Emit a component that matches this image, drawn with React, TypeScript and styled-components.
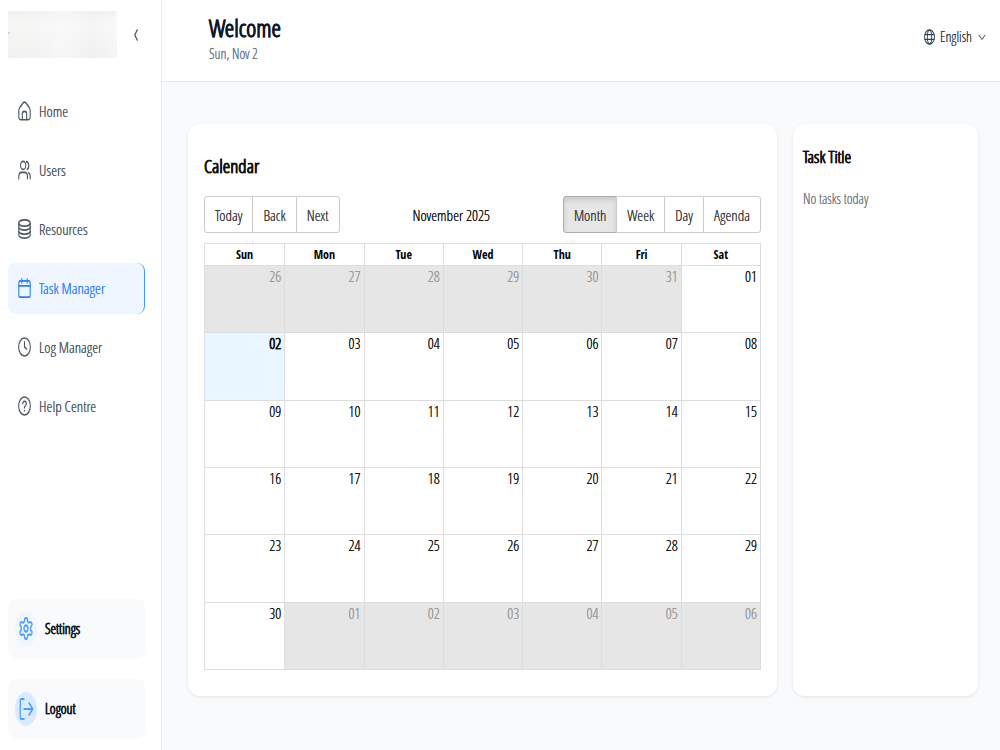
import React from "react";
import styled, { createGlobalStyle, css } from "styled-components";

const regular = `"Open Sans Condensed Light", "Open Sans", sans-serif`;
const bold = `"Open Sans Condensed", "Open Sans", sans-serif`;

const GlobalStyle = createGlobalStyle`
  *, *::before, *::after { box-sizing: border-box; }
  body {
    margin: 0;
    background: #f8fafc;
    color: #111;
    font-family: ${regular};
    font-size: 15px;
    line-height: 20px;
    text-shadow: 0 0 currentColor;
  }
  button, select { font: inherit; color: inherit; text-shadow: inherit; }
`;

const Shell = styled.div`
  display: flex;
  min-height: 100vh;
`;

const Sidebar = styled.aside`
  flex: none;
  width: 162px;
  display: flex;
  flex-direction: column;
  padding: 11px 16px 12px 8px;
  background: #fff;
  border-right: 1px solid #e9edf2;
`;

const Brand = styled.div`
  display: flex;
  align-items: center;
  gap: 16px;
  margin-bottom: 28px;
`;

const Logo = styled.svg`
  display: block;
  width: 109px;
  height: 47px;
`;

const CollapseButton = styled.button`
  display: flex;
  padding: 0;
  border: 0;
  background: none;
  color: #4b5563;
`;

const Nav = styled.nav`
  display: flex;
  flex-direction: column;
  gap: 8px;
`;

const NavLink = styled.a<{ $active?: boolean }>`
  display: flex;
  align-items: center;
  gap: 8px;
  height: 51px;
  padding: 0 10px 2px;
  border-radius: 8px;
  border-right: 1px solid transparent;
  color: #4b5563;
  text-decoration: none;
  ${(p) =>
    p.$active &&
    css`
      background: #eff6ff;
      border-right-color: #3b9bff;
      color: #2b7fff;
    `}
`;

const Actions = styled.div`
  display: flex;
  flex-direction: column;
  gap: 21px;
  margin-top: auto;
`;

const ActionButton = styled.button`
  display: flex;
  align-items: center;
  gap: 8px;
  height: 59px;
  padding: 0 7px;
  border: 0;
  border-radius: 8px;
  background: #f8fafc;
  color: #111827;
  font-weight: 700;
  font-size: 14px;
`;

const ActionIcon = styled.span<{ $strong?: boolean }>`
  display: flex;
  align-items: center;
  justify-content: center;
  width: 22px;
  height: 34px;
  border-radius: 50%;
  background: ${(p) => (p.$strong ? "#dbeafe" : "#eff6ff")};
  color: #4a9dff;
`;

const Page = styled.div`
  flex: 1;
  min-width: 0;
  display: flex;
  flex-direction: column;
`;

const Header = styled.header`
  display: flex;
  justify-content: space-between;
  align-items: flex-start;
  height: 82px;
  padding: 14px 14px 0 47px;
  background: #fff;
  border-bottom: 1px solid #e5e9ef;
`;

const Title = styled.h1`
  margin: 0;
  font-size: 24px;
  line-height: 28px;
  font-weight: 700;
  color: #0f172a;
`;

const DateLine = styled.p`
  margin: 2px 0 0;
  font-size: 14px;
  color: #64748b;
`;

const Language = styled.label`
  display: flex;
  align-items: center;
  gap: 5px;
  margin-top: 13px;
  font-size: 14px;
  color: #334155;
`;

const LanguageSelect = styled.select`
  appearance: none;
  padding: 0;
  border: 0;
  background: none;
`;

const Content = styled.main`
  display: grid;
  grid-template-columns: 589fr 185fr;
  gap: 16px;
  padding: 42px 22px 54px 26px;
  flex: 1;
`;

const Card = styled.section<{ $pad: string }>`
  min-width: 0;
  display: flex;
  flex-direction: column;
  padding: ${(p) => p.$pad};
  border-radius: 12px;
  background: #fff;
  box-shadow: 0 1px 3px rgba(15, 23, 42, 0.1);
`;

const CardTitle = styled.h2<{ $small?: boolean }>`
  margin: 0;
  font-size: ${(p) => (p.$small ? 17 : 19)}px;
  line-height: 24px;
  font-weight: 700;
  color: #111;
`;

const Toolbar = styled.div`
  display: flex;
  justify-content: space-between;
  align-items: center;
  margin: 18px 0 10px;
`;

const ButtonGroup = styled.div`
  display: flex;
`;

const ToolButton = styled.button<{ $active?: boolean }>`
  height: 37px;
  padding: 0 10px;
  border: 1px solid #ccc;
  background: #fff;
  color: #373a3c;
  & + & { margin-left: -1px; }
  &:first-child { border-radius: 3px 0 0 3px; }
  &:last-child { border-radius: 0 3px 3px 0; }
  ${(p) =>
    p.$active &&
    css`
      background: #e6e6e6;
      border-color: #adadad;
      box-shadow: inset 0 3px 5px rgba(0, 0, 0, 0.125);
    `}
`;

const MonthLabel = styled.span`
  color: #111;
`;

const Grid = styled.table`
  flex: 1;
  display: grid;
  grid-template-rows: 21px 1fr;
  border: 1px solid #ddd;
  thead { display: grid; }
  tbody { display: grid; grid-auto-rows: 1fr; }
  tr { display: grid; grid-template-columns: repeat(7, 1fr); }
`;

const DayName = styled.th`
  padding: 0;
  font-family: ${bold};
  font-size: 12px;
  font-weight: 700;
  line-height: 21px;
  text-align: center;
  color: #000;
  text-shadow: none;
  & + & { border-left: 1px solid #ddd; }
`;

const DayCell = styled.td<{ $off: boolean; $today: boolean }>`
  padding: 0 3px 0 0;
  text-align: right;
  border-top: 1px solid #ddd;
  color: ${(p) => (p.$off ? "#999" : "#111")};
  background: ${(p) => (p.$off ? "#e6e6e6" : p.$today ? "#eaf6ff" : "#fff")};
  font-weight: ${(p) => (p.$today ? 700 : 400)};
  & + & { border-left: 1px solid #ddd; }
`;

const Empty = styled.p`
  margin: 20px 0 0;
  font-size: 14px;
  color: #737a85;
`;

const Icon = ({ w = 13, h = 20, sw = 2, children }: {
  w?: number; h?: number; sw?: number; children: React.ReactNode;
}) => (
  <svg width={w} height={h} viewBox="0 0 24 24" preserveAspectRatio="none" fill="none"
    stroke="currentColor" strokeWidth={sw} strokeLinecap="round" strokeLinejoin="round" aria-hidden="true">
    {children}
  </svg>
);

const nav = [
  { label: "Home", icon: <><path d="M1.500 11.500C1.500 9.800 2 9 3.500 7.500L9.500 2.300C11 1 13 1 14.500 2.300L20.500 7.500C22 9 22.500 9.800 22.500 11.500V19C22.500 22 21.500 22.500 18 22.500H6C2.500 22.500 1.500 22 1.500 19Z" /><path d="M8 22V15.500C8 13.500 9 12.500 12 12.500S16 13.500 16 15.500V22" /></> },
  { label: "Users", icon: <><circle cx="9.500" cy="6.500" r="4.800" /><path d="M15.500 2A4.800 4.800 0 0 1 17 11.200" /><path d="M1.500 22.500V20C1.500 16.500 4 14.800 7 14.800H12C15 14.800 17.500 16.500 17.500 20V22.500" /><path d="M19.500 15.200C21.500 16 22.700 17.600 22.700 20V22.500" /></> },
  { label: "Resources", icon: <><ellipse cx="12" cy="4.800" rx="10.500" ry="3.700" /><path d="M1.500 4.800V19.200C1.500 21.200 6.500 23 12 23S22.500 21.200 22.500 19.200V4.800" /><path d="M1.500 9.800C1.500 11.800 6.500 13.400 12 13.400S22.500 11.800 22.500 9.800" /><path d="M1.500 14.700C1.500 16.700 6.500 18.300 12 18.300S22.500 16.700 22.500 14.700" /></> },
  { label: "Task Manager", active: true, icon: <><rect x="1.500" y="3.500" width="21" height="19.500" rx="3" /><path d="M1.500 9.500H22.500M7 1V6M17 1V6" /></> },
  { label: "Log Manager", icon: <><circle cx="12" cy="12" r="10.800" /><path d="M12 5.800V12L16 14.500" /></> },
  { label: "Help Centre", icon: <><circle cx="12" cy="12" r="10.800" /><path d="M8.800 9.200C9 7.300 10.300 6.300 12 6.300C14 6.300 15.400 7.500 15.400 9.200C15.400 11.500 12 11.700 12 14" /><path d="M12 17.500V17.600" /></> },
];

const days = ["Sun", "Mon", "Tue", "Wed", "Thu", "Fri", "Sat"];
const weeks = Array.from({ length: 6 }, (_, w) =>
  Array.from({ length: 7 }, (_, d) => {
    const date = new Date(2025, 9, 26 + w * 7 + d);
    return {
      label: String(date.getDate()).padStart(2, "0"),
      off: date.getMonth() !== 10,
      today: date.getMonth() === 10 && date.getDate() === 2,
    };
  })
);

export default function App() {
  return (
    <>
      <GlobalStyle />
      <Shell>
        <Sidebar>
          <Brand>
            <Logo viewBox="0 0 109 47" aria-label="Logo" role="img">
              <defs>
                <linearGradient id="haze">
                  <stop offset="0" stopColor="#f0f2ef" />
                  <stop offset="0.250" stopColor="#f3f1f1" />
                  <stop offset="0.500" stopColor="#f6f6f8" />
                  <stop offset="0.780" stopColor="#f1eff1" />
                  <stop offset="1" stopColor="#f5f5f5" />
                </linearGradient>
                <linearGradient id="fade" x2="0" y2="1">
                  <stop offset="0" stopColor="#fff" stopOpacity="0" />
                  <stop offset="0.300" stopColor="#fff" stopOpacity="0.400" />
                  <stop offset="1" stopColor="#fff" stopOpacity="0" />
                </linearGradient>
              </defs>
              <rect width="109" height="47" fill="url(#haze)" />
              <rect width="109" height="47" fill="url(#fade)" />
              <rect y="21" width="2" height="2" fill="#f7c9c9" />
            </Logo>
            <CollapseButton aria-label="Collapse sidebar">
              <Icon w={6} h={12} sw={4}><path d="M17 2L7 12L17 22" /></Icon>
            </CollapseButton>
          </Brand>
          <Nav>
            {nav.map((n) => (
              <NavLink href="#" key={n.label} $active={n.active}>
                <Icon>{n.icon}</Icon>
                {n.label}
              </NavLink>
            ))}
          </Nav>
          <Actions>
            <ActionButton>
              <ActionIcon>
                <Icon w={16} h={25}>
                  <path d="M12.200 2h-.4a2 2 0 0 0-2 2v.2a2 2 0 0 1-1 1.700l-.4.300a2 2 0 0 1-2 0l-.2-.1a2 2 0 0 0-2.700.7l-.2.400a2 2 0 0 0 .7 2.700l.2.100a2 2 0 0 1 1 1.700v.5a2 2 0 0 1-1 1.800l-.2.100a2 2 0 0 0-.7 2.700l.2.400a2 2 0 0 0 2.700.7l.2-.1a2 2 0 0 1 2 0l.4.300a2 2 0 0 1 1 1.700v.2a2 2 0 0 0 2 2h.4a2 2 0 0 0 2-2v-.2a2 2 0 0 1 1-1.700l.4-.3a2 2 0 0 1 2 0l.2.100a2 2 0 0 0 2.700-.7l.2-.4a2 2 0 0 0-.7-2.700l-.2-.1a2 2 0 0 1-1-1.800v-.5a2 2 0 0 1 1-1.700l.2-.1a2 2 0 0 0 .7-2.700l-.2-.4a2 2 0 0 0-2.700-.7l-.2.100a2 2 0 0 1-2 0l-.4-.3a2 2 0 0 1-1-1.700V4a2 2 0 0 0-2-2z" />
                  <circle cx="12" cy="12" r="3" />
                </Icon>
              </ActionIcon>
              Settings
            </ActionButton>
            <ActionButton>
              <ActionIcon $strong>
                <Icon w={15} h={24}><path d="M8 2H4C2.500 2 2 2.500 2 4V20C2 21.500 2.500 22 4 22H8M8 12H22M16 6L22 12L16 18" /></Icon>
              </ActionIcon>
              Logout
            </ActionButton>
          </Actions>
        </Sidebar>
        <Page>
          <Header>
            <div>
              <Title>Welcome</Title>
              <DateLine>Sun, Nov 2</DateLine>
            </div>
            <Language>
              <Icon w={11} h={16}>
                <circle cx="12" cy="12" r="10.800" />
                <ellipse cx="12" cy="12" rx="4.800" ry="10.800" />
                <path d="M2 8.500H22M2 15.500H22" />
              </Icon>
              <LanguageSelect aria-label="Language"><option>English</option></LanguageSelect>
              <Icon w={8} h={7} sw={3}><path d="M3 4L12 19L21 4" /></Icon>
            </Language>
          </Header>
          <Content>
            <Card $pad="30px 16px 26px">
              <CardTitle>Calendar</CardTitle>
              <Toolbar>
                <ButtonGroup>
                  <ToolButton>Today</ToolButton>
                  <ToolButton>Back</ToolButton>
                  <ToolButton>Next</ToolButton>
                </ButtonGroup>
                <MonthLabel>November 2025</MonthLabel>
                <ButtonGroup>
                  <ToolButton $active>Month</ToolButton>
                  <ToolButton>Week</ToolButton>
                  <ToolButton>Day</ToolButton>
                  <ToolButton>Agenda</ToolButton>
                </ButtonGroup>
              </Toolbar>
              <Grid>
                <thead><tr>{days.map((d) => <DayName key={d} scope="col">{d}</DayName>)}</tr></thead>
                <tbody>
                  {weeks.map((week, i) => (
                    <tr key={i}>
                      {week.map((c, j) => <DayCell key={j} $off={c.off} $today={c.today}>{c.label}</DayCell>)}
                    </tr>
                  ))}
                </tbody>
              </Grid>
            </Card>
            <Card $pad="21px 10px">
              <CardTitle $small>Task Title</CardTitle>
              <Empty>No tasks today</Empty>
            </Card>
          </Content>
        </Page>
      </Shell>
    </>
  );
}
